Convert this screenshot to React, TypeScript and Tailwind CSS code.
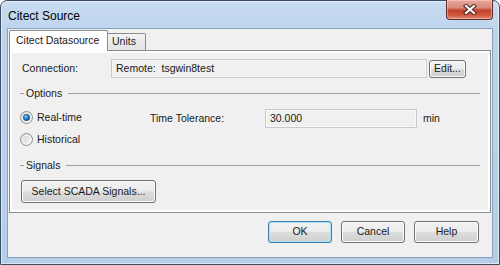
import React from "react";

const font = { fontFamily: '"Liberation Sans", Arial, sans-serif' };

function Radio({ checked }: { checked?: boolean }) {
  return (
    <svg width="13" height="13" viewBox="0 0 13 13" className="shrink-0">
      <defs>
        <linearGradient id={checked ? "rg1" : "rg0"} x1="0" y1="0" x2="1" y2="1">
          <stop offset="0" stopColor="#d4d4d4" />
          <stop offset="1" stopColor="#f7f7f7" />
        </linearGradient>
        <radialGradient id="dot" cx="0.4" cy="0.35" r="0.7">
          <stop offset="0" stopColor="#8fd3f5" />
          <stop offset="0.45" stopColor="#2a8ad1" />
          <stop offset="1" stopColor="#0d3f73" />
        </radialGradient>
      </defs>
      <circle cx="6.5" cy="6.5" r="6" fill={`url(#${checked ? "rg1" : "rg0"})`} stroke="#8e8f8f" strokeWidth="1" />
      <circle cx="6.5" cy="6.5" r="4.5" fill="none" stroke="#ffffff" strokeOpacity="0.6" strokeWidth="1" />
      {checked && <circle cx="6.5" cy="6.5" r="3.2" fill="url(#dot)" stroke="#1b4d7e" strokeWidth="0.6" />}
    </svg>
  );
}

function Btn({ children, w, h = "h-[22px]", def }: { children: React.ReactNode; w: string; h?: string; def?: boolean }) {
  return (
    <div
      className={`${w} ${h} flex items-center justify-center rounded-[3px] border text-[10.5px] text-[#1a1a1a] bg-[linear-gradient(to_bottom,#f2f2f2_0%,#ebebeb_48%,#dddddd_52%,#cfcfcf_100%)] ${
        def
          ? "border-[#3c7fb1] shadow-[inset_0_0_0_1px_#a9dcf7]"
          : "border-[#707070] shadow-[inset_0_0_0_1px_#fcfcfc]"
      }`}
    >
      {children}
    </div>
  );
}

function Field({ children, w }: { children: React.ReactNode; w: string }) {
  return (
    <div className={`${w} h-[19px] flex items-center pl-[4px] border border-[#c9c9c9] bg-[#f0f0f0] shadow-[inset_0_0_0_1px_#f8f8f8] text-[10.5px] text-[#1a1a1a] whitespace-nowrap`}>
      {children}
    </div>
  );
}

function GroupHeader({ label }: { label: string }) {
  return (
    <div className="flex items-center h-[13px]">
      <div className="ml-[8px] w-[4px] h-px bg-[#a0a0a0]" />
      <span className="px-[2px] text-[10.5px] leading-[13px]">{label}</span>
      <div className="ml-[4px] mr-[8px] flex-1 h-px bg-[#a0a0a0]" />
    </div>
  );
}

export default function App() {
  return (
    <div className="w-[500px] h-[265px] bg-white" style={font}>
      <div className="relative w-[500px] h-[265px] rounded-t-[7px] border border-[#3a4d62] bg-[linear-gradient(to_bottom,#c8dcf1_0%,#bdd4ed_12%,#b4cde9_100%)] shadow-[inset_0_0_0_1px_rgba(255,255,255,0.55)] flex flex-col px-[6px] pb-[6px]">
        {/* title bar */}
        <div className="h-[27px] flex items-center pl-[1px] pt-[2px] text-[12px] text-black">Citect Source</div>
        {/* close button */}
        <div className="absolute top-[-1px] right-[6px] w-[47px] h-[20px] rounded-b-[4px] border border-[#5d2d27] border-t-0 bg-[linear-gradient(to_bottom,#e9a99b_0%,#d88a7c_40%,#c1422e_55%,#d0583f_80%,#e08b74_100%)] shadow-[inset_0_0_0_1px_rgba(255,220,210,0.45)] flex items-center justify-center">
          <svg width="14" height="11" viewBox="0 0 14 11">
            <path d="M3 2 L11 9 M11 2 L3 9" stroke="#4a2520" strokeWidth="4.2" strokeLinecap="square" />
            <path d="M3 2 L11 9 M11 2 L3 9" stroke="#ffffff" strokeWidth="2.2" strokeLinecap="square" />
          </svg>
        </div>
        {/* client */}
        <div className="flex-1 border border-[#8da2ba] bg-[#f0f0f0] flex flex-col text-[10.5px] text-[#1a1a1a]">
          {/* tabs */}
          <div className="flex items-end pl-[1px] pt-[1px] h-[22px] relative z-10">
            <div className="w-[99px] h-[21px] border border-[#898c95] border-b-0 bg-white rounded-t-[2px] flex items-center pl-[6px] pb-[1px]">
              Citect Datasource
            </div>
            <div className="w-[38px] h-[18px] border border-[#898c95] border-l-0 border-b-[#898c95] bg-[linear-gradient(to_bottom,#f3f3f3,#e3e3e3)] rounded-tr-[2px] flex items-center pl-[4px] mb-0">
              Units
            </div>
          </div>
          {/* panel */}
          <div className="mx-[1px] mt-[-1px] h-[163px] border border-[#898c95] bg-white p-[2px] flex">
            <div className="flex-1 bg-[#f0f0f0] flex flex-col">
              <div className="mt-[6px] flex items-center h-[19px]">
                <div className="w-[99px] pl-[10px]">Connection:</div>
                <Field w="w-[316px]">Remote:&nbsp; tsgwin8test</Field>
                <div className="ml-[2px]">
                  <Btn w="w-[37px]" h="h-[18px]">Edit...</Btn>
                </div>
              </div>
              <div className="mt-[9px]">
                <GroupHeader label="Options" />
              </div>
              <div className="mt-[9px] flex items-start h-[19px]">
                <div className="w-[138px] h-[17px] flex items-center pl-[8px]">
                  <Radio checked />
                  <span className="ml-[4px]">Real-time</span>
                </div>
                <div className="w-[115px] h-[19px] flex items-center">Time Tolerance:</div>
                <Field w="w-[152px]">30.000</Field>
                <div className="h-[19px] flex items-center ml-[6px]">min</div>
              </div>
              <div className="mt-[3px] h-[17px] flex items-center pl-[8px]">
                <Radio />
                <span className="ml-[4px]">Historical</span>
              </div>
              <div className="mt-[11px]">
                <GroupHeader label="Signals" />
              </div>
              <div className="mt-[8px] pl-[9px]">
                <Btn w="w-[135px]" h="h-[23px]">Select SCADA Signals...</Btn>
              </div>
            </div>
          </div>
          {/* bottom buttons */}
          <div className="mt-[8px] flex justify-end gap-[9px] pr-[13px]">
            <Btn w="w-[64px]" def>OK</Btn>
            <Btn w="w-[64px]">Cancel</Btn>
            <Btn w="w-[65px]">Help</Btn>
          </div>
        </div>
      </div>
    </div>
  );
}
